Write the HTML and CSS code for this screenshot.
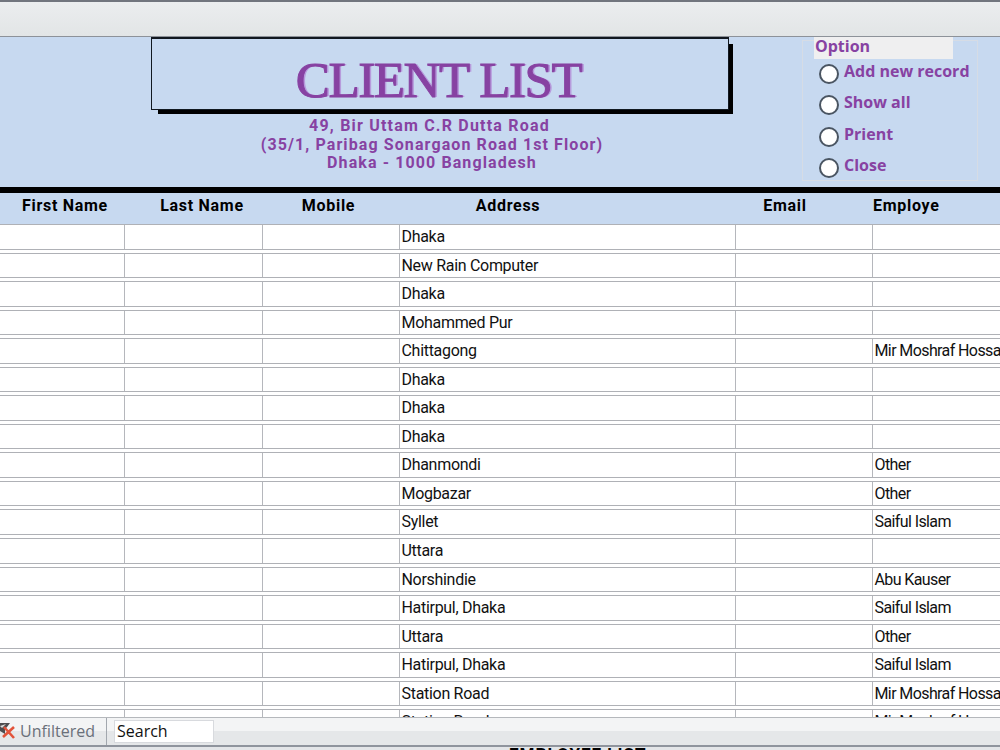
FILE: index.html
```html
<!DOCTYPE html>
<html lang="en">
<head>
    <meta charset="UTF-8">
    <meta name="viewport" content="width=device-width, initial-scale=1.0">
    <title>Client List</title>
    <link rel="stylesheet" href="styles.css">
</head>
<body>

    <div class="toolbar"></div>

    <!-- Form header -->
    <header>
        <div class="heading">
            <div class="title-box"><h1>CLIENT LIST</h1></div>
            <div class="address">
                <p class="street">49, Bir Uttam C.R Dutta Road</p>
                <p>(35/1, Paribag Sonargaon Road 1st Floor)</p>
                <p>Dhaka - 1000 Bangladesh</p>
            </div>
        </div>
        <div class="options">
            <div class="option-title">Option</div>
            <label><input type="radio" name="option"><span>Add new record</span></label>
            <label><input type="radio" name="option"><span>Show all</span></label>
            <label><input type="radio" name="option"><span>Prient</span></label>
            <label><input type="radio" name="option"><span>Close</span></label>
        </div>
    </header>

    <div class="columns">
        <div class="col-first">First Name</div>
        <div class="col-last">Last Name</div>
        <div class="col-mobile">Mobile</div>
        <div class="col-address">Address</div>
        <div class="col-email">Email</div>
        <div class="col-employe">Employe</div>
    </div>

    <!-- Client records -->
    <div class="records">
        <div class="row"><div></div><div></div><div></div><div>Dhaka</div><div></div><div></div></div>
        <div class="row"><div></div><div></div><div></div><div>New Rain Computer</div><div></div><div></div></div>
        <div class="row"><div></div><div></div><div></div><div>Dhaka</div><div></div><div></div></div>
        <div class="row"><div></div><div></div><div></div><div>Mohammed Pur</div><div></div><div></div></div>
        <div class="row"><div></div><div></div><div></div><div>Chittagong</div><div></div><div>Mir Moshraf Hossa</div></div>
        <div class="row"><div></div><div></div><div></div><div>Dhaka</div><div></div><div></div></div>
        <div class="row"><div></div><div></div><div></div><div>Dhaka</div><div></div><div></div></div>
        <div class="row"><div></div><div></div><div></div><div>Dhaka</div><div></div><div></div></div>
        <div class="row"><div></div><div></div><div></div><div>Dhanmondi</div><div></div><div>Other</div></div>
        <div class="row"><div></div><div></div><div></div><div>Mogbazar</div><div></div><div>Other</div></div>
        <div class="row"><div></div><div></div><div></div><div>Syllet</div><div></div><div>Saiful Islam</div></div>
        <div class="row"><div></div><div></div><div></div><div>Uttara</div><div></div><div></div></div>
        <div class="row"><div></div><div></div><div></div><div>Norshindie</div><div></div><div>Abu Kauser</div></div>
        <div class="row"><div></div><div></div><div></div><div>Hatirpul, Dhaka</div><div></div><div>Saiful Islam</div></div>
        <div class="row"><div></div><div></div><div></div><div>Uttara</div><div></div><div>Other</div></div>
        <div class="row"><div></div><div></div><div></div><div>Hatirpul, Dhaka</div><div></div><div>Saiful Islam</div></div>
        <div class="row"><div></div><div></div><div></div><div>Station Road</div><div></div><div>Mir Moshraf Hossa</div></div>
        <div class="row"><div></div><div></div><div></div><div>Station Road</div><div></div><div>Mir Moshraf Hossa</div></div>
    </div>

    <!-- Record navigation bar -->
    <footer>
        <div class="filter">
            <svg width="16" height="18" viewBox="0 0 16 18">
                <path d="M0 1H10L7 5L5 7V12L0 9Z" fill="#4d4d4f"/>
                <path d="M0 4L6 2L2 6Z" fill="#ddd"/>
                <path d="M4 5L14 16M14 5L3 15" stroke="#e2533a" stroke-width="2.6" fill="none"/>
            </svg>
            <span>Unfiltered</span>
        </div>
        <input class="search" type="text" value="Search">
    </footer>
    <div class="below">EMPLOYEE LIST</div>

</body>
</html>
```
FILE: styles.css
```css
* {
    box-sizing: border-box;
}
body {
    margin: 0;
    height: 750px;
    overflow: hidden;
    background: #fff;
    font-family: Roboto, "Liberation Sans", sans-serif;
    font-size: 16px;
    color: #111;
}
.toolbar {
    height: 37px;
    background: linear-gradient(#ebedef, #e2e5e6);
    border-top: 2px solid #71757e;
    border-bottom: 1px solid #8d9299;
}
header {
    display: flex;
    height: 156px;
    padding-left: 151px;
    background: #c7d9f0;
    border-bottom: 6px solid #000;
    color: #8742a2;
}
.heading {
    width: 578px;
}
.title-box {
    height: 73px;
    border: 1px solid #111820;
    border-top-width: 2px;
    box-shadow: 4px 4px 0 #000;
    clip-path: polygon(0 0, 100% 0, 100% 7px, 582px 7px, 582px 77px, 7px 77px, 7px 100%, 0 100%);
}
h1 {
    margin: 0;
    padding: 11px 3px 0 0;
    text-align: center;
    font: 51px/60px "Liberation Serif", serif;
    letter-spacing: -1.4px;
    -webkit-text-stroke: 1px #8742a2;
    text-shadow: 2px 0 0 #b79bdc;
}
.address {
    padding-top: 7px;
    margin-left: -16px;
    text-align: center;
    font-weight: bold;
    line-height: 18.5px;
    letter-spacing: 1.1px;
}
.address p {
    margin: 0;
    white-space: nowrap;
}
.address .street {
    padding-right: 5px;
    letter-spacing: 1.2px;
}
.options {
    width: 176px;
    height: 141px;
    margin: 3px 0 0 73px;
    padding-left: 11px;
    border: 1px solid #d6dce5;
    font-family: "Open Sans", sans-serif;
    font-weight: bold;
}
.option-title {
    width: 139px;
    height: 22px;
    margin-top: -4px;
    padding-left: 1px;
    background: #efeff0;
    line-height: 18px;
}
.options label {
    display: flex;
    height: 31.3px;
    padding: 2px 0 0 5px;
    line-height: 21px;
}
.options input {
    appearance: none;
    flex: none;
    width: 20px;
    height: 20px;
    margin: 3px 5px 0 0;
    border: 2px solid #4a5562;
    border-radius: 50%;
    background: #fff;
}
.options span {
    white-space: nowrap;
}
.columns, .row {
    display: grid;
    grid-template-columns: 124px 138px 137px 336px 137px 128px;
}
.columns {
    height: 31px;
    padding-top: 3px;
    background: #c7d9f0;
    color: #000;
    font-weight: bold;
    line-height: 20px;
    text-align: center;
    letter-spacing: 0.7px;
}
.columns .col-first {
    padding-left: 6px;
}
.columns .col-last {
    padding-left: 18px;
}
.columns .col-mobile {
    padding-right: 4px;
}
.columns .col-address {
    padding-right: 118px;
}
.columns .col-email {
    padding-right: 37px;
}
.columns .col-employe {
    padding-left: 1px;
    text-align: left;
}
.records {
    height: 493px;
    overflow: hidden;
}
.row {
    height: 25.56px;
    margin-bottom: 3px;
    border: 1px solid #afb1b6;
    border-width: 1px 0;
    line-height: 23px;
    letter-spacing: -0.3px;
}
.row div {
    padding-left: 1.5px;
    border-left: 1px solid #b5b7bc;
    white-space: nowrap;
}
.row div:first-child {
    border-left: none;
}
.row div:last-child {
    letter-spacing: -0.6px;
}
footer {
    display: flex;
    height: 28px;
    border-top: 1px solid #b5b8bc;
    background: linear-gradient(#f3f4f5 50%, #e5e7e9 50%);
}
.filter {
    display: flex;
    align-items: center;
    width: 107px;
    padding-bottom: 2px;
    border-right: 1px solid #a2a7ae;
    color: #6a707a;
    font-family: "Open Sans", sans-serif;
}
.filter span {
    margin-left: 4px;
}
.search {
    width: 100px;
    height: 23px;
    margin: 2px 0 0 7px;
    padding: 0 2px 2px;
    border: 1px solid #d8dade;
    background: #fff;
    color: #111;
    font: 16px "Open Sans", sans-serif;
}
.below {
    height: 5px;
    padding-left: 509px;
    overflow: hidden;
    border-top: 2px solid #8f949d;
    background: #e3e5e8;
    color: #000;
    font-size: 17px;
    font-weight: bold;
    line-height: 14px;
    letter-spacing: 1px;
}
```
